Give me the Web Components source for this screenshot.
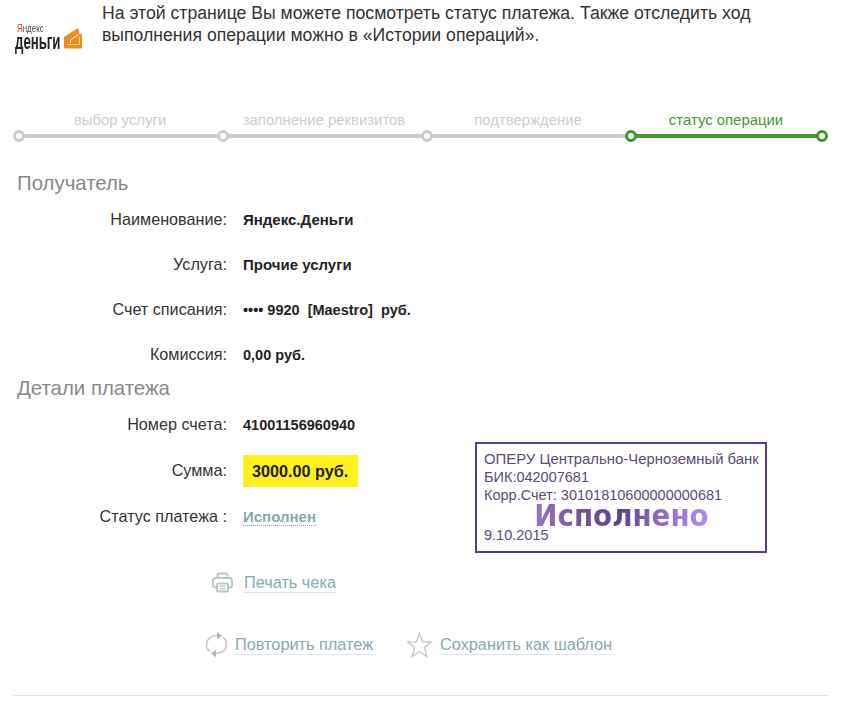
<!DOCTYPE html>
<html lang="ru">
<head>
<meta charset="utf-8">
<title>Статус платежа</title>
<style>
  html, body { margin: 0; padding: 0; background: #fff; }
  body { font-family: "Liberation Sans", Arial, sans-serif; color: #333; overflow: hidden; }
</style>
</head>
<body>
<payment-page></payment-page>

<script>
class YmLogo extends HTMLElement {
  constructor() {
    super();
    this.attachShadow({ mode: 'open' });
  }

  connectedCallback() {
    this.shadowRoot.innerHTML = `
      <style>
        :host { display: flex; align-items: flex-end; width: 68px; height: 27px; gap: 1px; }
        .words { display: flex; flex-direction: column; width: 47px; flex: none; }
        .ya {
          font: 11px/10px "Liberation Sans", sans-serif;
          color: #444;
          margin-left: 2px;
          white-space: nowrap;
          transform: scaleX(.72);
          transform-origin: left;
        }
        .ya b { color: #e8332a; font-weight: 400; }
        .den {
          font: bold 22px/18px "Liberation Sans", sans-serif;
          color: #222;
          white-space: nowrap;
          transform: scaleX(.6);
          transform-origin: left;
        }
        svg { width: 19px; height: 21px; flex: none; margin-bottom: 2px; }
      </style>
      <div class="words">
        <span class="ya"><b>Я</b>ндекс</span>
        <span class="den">деньги</span>
      </div>
      <svg viewBox="0 0 19 21">
        <path fill="#f28a1e" d="M1 9 13.500 1c1-.6 2.500 0 2.500 1.200V6h1.500C18.300 6 19 6.700 19 7.500V19c0 .8-.7 1.500-1.500 1.500h-15C1.700 20.500 1 19.800 1 19z"/>
        <path fill="none" stroke="#fff" stroke-width="1" d="M7.500 12 15.500 6.500M7.500 12v3"/>
        <path fill="none" stroke="#ffd3a0" stroke-width="1" d="M16.500 9v7.500H5"/>
      </svg>
    `;
  }
}

class StepBar extends HTMLElement {
  constructor() {
    super();
    this.attachShadow({ mode: 'open' });
  }

  connectedCallback() {
    const steps = [
      ['выбор услуги', 204],
      ['заполнение реквизитов', 204],
      ['подтверждение', 204],
      ['статус операции', 192],
    ];
    const cols = steps.map((s, i) => `
      <div class="step ${i === 3 ? 'on' : ''}" style="width:${s[1]}px">
        <span class="label">${s[0]}</span>
        <span class="line"><i></i>${i === 3 ? '<i class="end"></i>' : ''}</span>
      </div>`).join('');
    this.shadowRoot.innerHTML = `
      <style>
        :host { display: flex; margin-left: 18px; }
        .step { display: flex; flex-direction: column; align-items: center; font-size: 14.9px; color: #ccc; }
        .label { line-height: 16px; height: 16px; margin-bottom: 6px; white-space: nowrap; }
        .line { display: block; position: relative; width: 100%; height: 4px; background: #ccc; }
        i {
          position: absolute;
          left: -5px;
          top: -4px;
          width: 6px;
          height: 6px;
          border: 3px solid #ccc;
          border-radius: 50%;
          background: #fff;
        }
        i.end { left: auto; right: -6px; }
        .on { color: #3f982b; }
        .on .line { background: #3f982b; }
        .on i { border-color: #3f982b; }
      </style>
      ${cols}
    `;
  }
}

class SectionTitle extends HTMLElement {
  constructor() {
    super();
    this.attachShadow({ mode: 'open' });
  }

  connectedCallback() {
    this.shadowRoot.innerHTML = `
      <style>
        :host { display: block; font-size: 20.4px; line-height: 24px; color: #888; margin-left: 17px; }
      </style>
      <slot></slot>
    `;
  }
}

class InfoRow extends HTMLElement {
  constructor() {
    super();
    this.attachShadow({ mode: 'open' });
  }

  connectedCallback() {
    this.shadowRoot.innerHTML = `
      <style>
        :host { display: flex; align-items: center; gap: 16px; height: 45px; font-size: 15px; }
        .name { width: 227px; text-align: right; font-size: 16.2px; color: #333; flex: none; white-space: pre; }
        .val { font-weight: bold; color: #222; white-space: pre; }
      </style>
      <span class="name">${this.getAttribute('label')}</span>
      <span class="val"><slot></slot></span>
    `;
  }
}

class PaymentStamp extends HTMLElement {
  constructor() {
    super();
    this.attachShadow({ mode: 'open' });
  }

  connectedCallback() {
    this.shadowRoot.innerHTML = `
      <style>
        :host {
          display: block;
          box-sizing: border-box;
          width: 292px;
          height: 111px;
          border: 2px solid #5b3f7d;
          padding: 6px 7px 0;
          font-size: 14.9px;
          line-height: 18px;
          color: #5b4a78;
          white-space: nowrap;
        }
        .mark {
          display: block;
          width: max-content;
          margin: 0 auto;
          font: bold 31px/22px "DejaVu Sans", sans-serif;
          transform: scaleX(.895);
          background: linear-gradient(90deg, #9a72c4 0%, #77559f 25%, #5f4288 50%, #8a64b8 68%, #b48ce8 100%);
          -webkit-background-clip: text;
          background-clip: text;
          color: transparent;
        }
        .digits { font-size: 14.5px; }
      </style>
      <div>ОПЕРУ Центрально-Черноземный банк</div>
      <div class="digits">БИК:042007681</div>
      <div class="digits">Корр.Счет: 30101810600000000681</div>
      <span class="mark">Исполнено</span>
      <div class="digits">9.10.2015</div>
    `;
  }
}

class IconLink extends HTMLElement {
  constructor() {
    super();
    this.attachShadow({ mode: 'open' });
  }

  connectedCallback() {
    this.shadowRoot.innerHTML = `
      <style>
        :host { display: inline-flex; align-items: center; gap: var(--gap, 7px); font-size: 16.3px; color: #85a9af; }
        a { color: inherit; text-decoration: none; border-bottom: 1px solid #dfe5e6; line-height: 20px; white-space: nowrap; }
        ::slotted(svg) { flex: none; display: block; }
      </style>
      <slot name="icon"></slot>
      <a href="#"><slot></slot></a>
    `;
  }
}

class PaymentPage extends HTMLElement {
  constructor() {
    super();
    this.attachShadow({ mode: 'open' });
  }

  connectedCallback() {
    this.shadowRoot.innerHTML = `
      <style>
        :host { display: block; width: 857px; height: 703px; box-sizing: border-box; font-family: "Liberation Sans", Arial, sans-serif; }
        .top { display: flex; align-items: flex-start; height: 112px; }
        ym-logo { margin: 24px 0 0 15px; }
        .intro { margin: 2px 0 0 19px; width: 700px; font-size: 17.65px; line-height: 22px; color: #333; }
        section-title.first { margin-top: 33px; }
        section-title.second { margin-top: -1px; }
        .details { display: flex; align-items: flex-start; }
        .details .rows { width: 475px; flex: none; margin-top: 2px; }
        .sum {
          display: inline-block;
          background: #fff01f;
          padding: 0 10px 0 9px;
          line-height: 32px;
          font-size: 16.2px;
          color: #222;
        }
        .status { color: #85a9af; border-bottom: 1px dotted #85a9af; line-height: 16px; display: inline-block; }
        .num { font-size: 14.5px; }
        payment-stamp { margin-top: 42px; }
        .print { margin: 19px 0 0 212px; }
        .print icon-link { --gap: 11px; }
        .actions { display: flex; align-items: center; margin: 34px 0 0 205px; gap: 34px; }
        .actions .star { --gap: 8px; }
        hr { border: 0; border-top: 1px solid #e3e3e3; margin: 37px 28px 0 13px; }
      </style>

      <div class="top">
        <ym-logo></ym-logo>
        <div class="intro">На этой странице Вы можете посмотреть статус платежа. Также отследить ход выполнения операции можно в «Истории операций».</div>
      </div>

      <step-bar></step-bar>

      <section-title class="first">Получатель</section-title>
      <div style="margin-top:2px">
        <info-row label="Наименование:">Яндекс.Деньги</info-row>
        <info-row label="Услуга:">Прочие услуги</info-row>
        <info-row label="Счет списания:"><span class="num">•••• 9920  [Maestro]  руб.</span></info-row>
        <info-row label="Комиссия:"><span class="num">0,00 руб.</span></info-row>
      </div>

      <section-title class="second">Детали платежа</section-title>
      <div class="details">
        <div class="rows">
          <info-row label="Номер счета:"><span class="num">41001156960940</span></info-row>
          <info-row label="Сумма:" style="height:47px"><span class="sum">3000.00 руб.</span></info-row>
          <info-row label="Статус платежа :"><span class="status">Исполнен</span></info-row>
        </div>
        <payment-stamp></payment-stamp>
      </div>

      <div class="print">
        <icon-link>
          <svg slot="icon" width="21" height="21" viewBox="0 0 21 21" fill="none" stroke="#b5c6c3" stroke-width="1.800">
            <path d="M5.500 6V2.500c0-.6.4-1 1-1h8c.6 0 1 .4 1 1V6"/>
            <path d="M5 15.500H3c-1 0-2-.8-2-2V9c0-1.700 1.300-3 3-3h13c1.700 0 3 1.300 3 3v4.500c0 1.200-1 2-2 2h-2"/>
            <rect x="5" y="11.500" width="11" height="8" rx="1"/>
            <path stroke-width="1.200" d="M7.500 14.200h6M7.500 16.800h6"/>
          </svg>
          Печать чека
        </icon-link>
      </div>

      <div class="actions">
        <icon-link>
          <svg slot="icon" width="23" height="27" viewBox="0 0 23 27" fill="none" stroke="#c8c8c8" stroke-width="1.500">
            <path d="M12.500 4.600C6.500 4.200 1.500 8 1.500 13.500c0 3 1.300 5.600 3.500 7.200"/>
            <path d="M10.500 22.400c6 .4 11-3.400 11-8.900 0-3-1.300-5.600-3.500-7.200"/>
            <path fill="#b4b4b4" stroke="none" d="M12 .8 17 4.700 12 8.500zM11 18.500l-5 3.900 5 3.800z"/>
          </svg>
          Повторить платеж
        </icon-link>
        <icon-link class="star">
          <svg slot="icon" width="25" height="26" viewBox="0 0 25 26" fill="none" stroke="#c8c8c8" stroke-width="1.500" stroke-linejoin="miter">
            <path d="M12.500 1.500 15.600 9.700 24 10 17.500 15.500 19.700 24.500 12.500 19.500 5.300 24.500 7.500 15.500 1 10 9.400 9.700z"/>
          </svg>
          Сохранить как шаблон
        </icon-link>
      </div>

      <hr>
    `;
  }
}

customElements.define('ym-logo', YmLogo);
customElements.define('step-bar', StepBar);
customElements.define('section-title', SectionTitle);
customElements.define('info-row', InfoRow);
customElements.define('payment-stamp', PaymentStamp);
customElements.define('icon-link', IconLink);
customElements.define('payment-page', PaymentPage);
</script>
</body>
</html>
